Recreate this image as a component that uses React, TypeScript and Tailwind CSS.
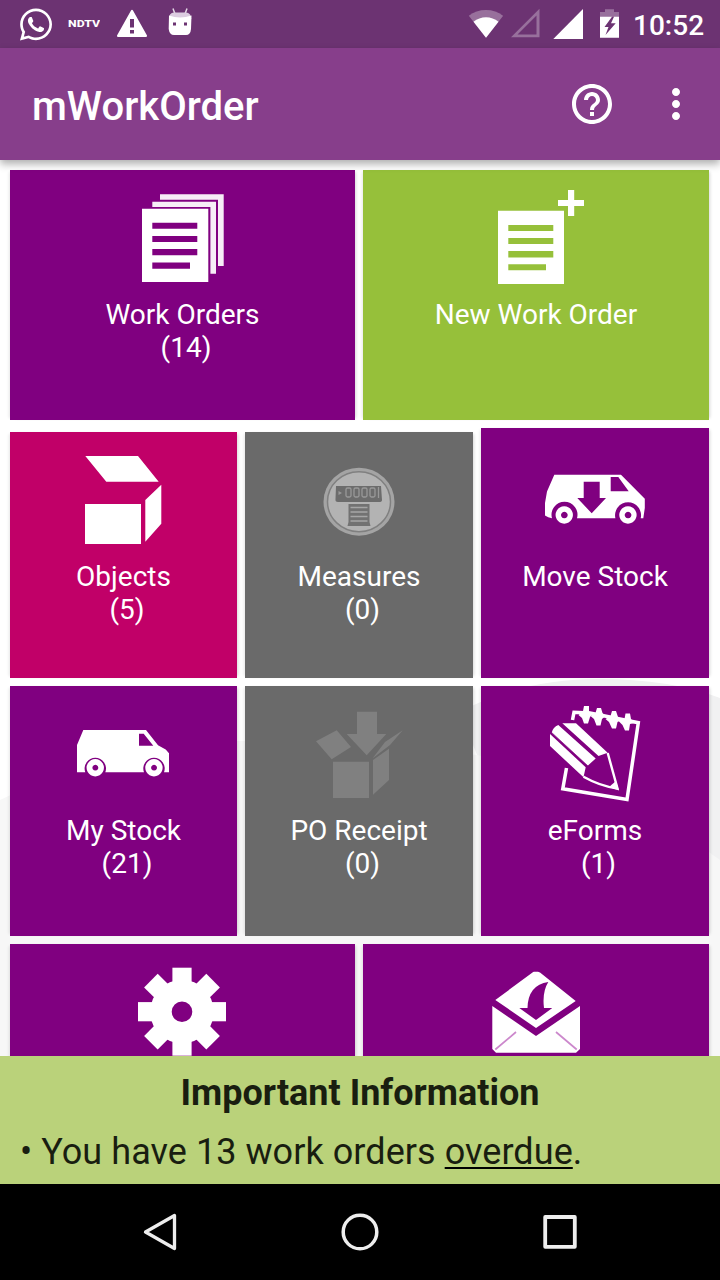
import type { ReactNode } from "react";
import { FaWhatsapp } from "react-icons/fa";
import { MdHelpOutline, MdMoreVert } from "react-icons/md";

function StatusBar() {
  return (
    <div className="flex h-12 shrink-0 items-center bg-[#6c3372] pr-4 pl-5 text-white">
      <FaWhatsapp className="h-[37px] w-8" />
      <svg className="ml-4 h-12 w-8" viewBox="68 0 32 48">
        <text x="68" y="27" fontSize="8.5" fontWeight="800" fill="#fff" textLength="32" lengthAdjust="spacingAndGlyphs" fontFamily="Roboto, sans-serif">
          NDTV
        </text>
      </svg>
      <svg className="ml-4 h-12 w-8" viewBox="116 0 32 48" fill="#fff">
        <path fillRule="evenodd" d="M132 9.7Q132.6 9.7 133 10.4L147 35.6Q147.4 37 146 37H118Q116.600 37 117 35.600L131 10.400Q131.400 9.700 132 9.700ZM130 19V27.500H134V19ZM130 30V33.500H134V30Z" />
      </svg>
      <svg className="ml-5 h-12 w-6" viewBox="168 0 24 48">
        <path d="M173 8.500L175 14M187 8.500L185 14" stroke="#e3d7e5" strokeWidth="1.500" />
        <path d="M169 19Q169 12.500 174 12.500H186Q191 12.500 191.300 19Z" fill="#dccce0" />
        <path d="M169 15.500Q180 19.500 191.500 15.500L191 29Q190.500 35 186 35H174Q169.500 35 168.700 29Z" fill="#fff" />
        <rect x="173" y="22.500" width="3" height="3" fill="#6c3372" />
        <rect x="184" y="22.500" width="3" height="3" fill="#6c3372" />
      </svg>
      <div className="flex-1" />
      <svg className="h-12 w-[35px]" viewBox="468 0 35 48" fill="#fff">
        <path fillOpacity=".3" d="M486 37.700L468.800 15.800Q476 10 486 10Q496 10 503.200 15.800Z" />
        <path d="M486 37.700L473.500 21.800Q479 17.300 486 17.300Q493 17.300 498.500 21.800Z" />
      </svg>
      <svg className="ml-2 h-12 w-[29px]" viewBox="511 0 29 48">
        <path fill="#fff" fillOpacity=".3" fillRule="evenodd" d="M511 37.300L539.500 8.700V37.300ZM517.500 34.500H536.500V15.500Z" />
      </svg>
      <svg className="ml-3 h-12 w-[31px]" viewBox="552 0 31 48">
        <path fill="#fff" d="M553.300 39L583 9V39Z" />
      </svg>
      <svg className="ml-[17px] h-12 w-[19px]" viewBox="600 0 19 48">
        <path fill="#fff" fillOpacity=".3" d="M600 17V12H605V9.200H614V12H619V17Z" />
        <path fill="#fff" fillRule="evenodd" d="M600 16.700H612L604.500 27H608.500L605.500 35L615.700 23.200H611L614 16.700H619V37.700H600Z" />
      </svg>
      <span className="ml-[14px] w-[71px] pt-[3px] text-[28px] leading-[45px] font-medium">10:52</span>
    </div>
  );
}

function AppBar() {
  return (
    <header className="relative z-10 flex h-28 shrink-0 items-center bg-[#873e8b] pr-5 pl-8 text-white shadow-[0_4px_8px_rgba(0,0,0,0.32)]">
      <h1 className="flex-1 pt-1.5 text-[40px] leading-[48px] font-medium">mWorkOrder</h1>
      <MdHelpOutline className="mr-9 size-12" />
      <MdMoreVert className="size-12" />
    </header>
  );
}

type TileProps = {
  tone: string;
  view: string;
  label?: string;
  count?: number;
  iconClass?: string;
  children: ReactNode;
};

function Tile({ tone, view, label, count, iconClass = "h-32", children }: TileProps) {
  return (
    <div className={`flex flex-col items-center overflow-hidden text-[28px] leading-[33px] text-white shadow-[3px_0_3px_-2px_rgba(0,0,0,0.16),-3px_0_3px_-2px_rgba(0,0,0,0.1)] ${tone}`}>
      <svg className={`w-[110px] shrink-0 ${iconClass}`} viewBox={view} fill="#fff">
        {children}
      </svg>
      {label && <span className="whitespace-nowrap">{label}</span>}
      {count !== undefined && <span className="whitespace-pre">{"\u00a0(" + count + ")"}</span>}
    </div>
  );
}

const PURPLE = "bg-[#800080]";
const GREY = "bg-[#6a6a6a]";

function Backdrop() {
  return (
    <svg className="absolute inset-0 -z-10 h-full w-full" viewBox="0 160 720 896" preserveAspectRatio="none">
      <rect y="160" width="720" height="896" fill="#fff" />
      <path d="M0 800Q120 741 240 741Q360 741 477 755H720V1056H0Z" fill="#f7f7f7" />
      <path d="M460 712Q520 679 600 679Q670 679 720 698V860Q690 840 640 790L477 755Z" fill="#f1f1f2" />
    </svg>
  );
}

function Tiles() {
  return (
    <main className="relative isolate flex h-[896px] shrink-0 flex-col gap-2 overflow-hidden pt-[10px] pr-[11px] pl-[10px]">
      <Backdrop />
      <div className="grid h-[250px] shrink-0 grid-cols-[345px_346px] gap-2">
        <Tile tone={PURPLE} view="128 170 110 128" label="Work Orders" count={14}>
          <path fillRule="evenodd" d="M142 208.700H208.300V282H142ZM152.300 222.700V228.700H197.300V222.700ZM152.300 236V242H197.300V236ZM152.300 249V255.300H197.300V249ZM152.300 262.500V268.700H190V262.500Z" />
          <path d="M152.300 201.800H216V273.700H210.400V207H152.300Z" fillOpacity=".93" />
          <path d="M160 194.300H223.700V266H218V199.800H160Z" fillOpacity=".93" />
        </Tile>
        <Tile tone="bg-[#96c03a]" view="481 170 110 128" label="New Work Order">
          <path fillRule="evenodd" d="M498 210.700H564V284H498ZM508.300 225V231H553.300V225ZM508.300 238V244H553.300V238ZM508.300 251V257.500H553.300V251ZM508.300 264.300V270.300H546V264.300Z" />
          <path d="M568 190H574.200V200H584V206H574.200V216H568V206H558V200H568Z" />
        </Tile>
      </div>
      <div className="grid h-[250px] shrink-0 grid-cols-[227px_228px_228px] gap-2">
        <Tile tone="mt-1 bg-[#c10068]" view="69 432 110 128" label="Objects" count={5}>
          <path d="M85.300 456H138L158.700 481.700H106.300ZM85 504H141V544H85ZM161.300 484.700V523.700L145.300 541.700V500Z" />
        </Tile>
        <Tile tone={`mt-1 ${GREY}`} view="304 432 110 128" label="Measures" count={0}>
          <ellipse cx="359" cy="501.700" rx="35.500" ry="34" fill="#a4a4a4" />
          <ellipse cx="359" cy="501.700" rx="31.500" ry="30" fill="#b3b3b3" stroke="#808080" strokeWidth="1.500" />
          <path d="M336 486H381L382 500Q382 502 379 502H338Q335 502 335.500 499Z" fill="#6c6c6c" />
          <path d="M338.500 491L342 493L338.500 495Z" fill="#999" />
          <g fill="none" stroke="#999" strokeWidth="1.300">
            <rect x="346" y="488" width="5" height="9" rx="1.500" />
            <rect x="354" y="488" width="5" height="9" rx="1.500" />
            <rect x="362" y="488" width="5" height="9" rx="1.500" />
            <rect x="370" y="488" width="5" height="9" rx="1.500" />
            <path d="M378.500 487V498" />
          </g>
          <path d="M348.500 504H369.500V522L370.500 526H347.500L348.500 522Z" fill="#727272" />
          <path d="M350.500 507.500H367.500M350.500 512H367.500M350.500 516.500H367.500M350.500 521H367.500" stroke="#a6a6a6" strokeWidth="1.600" />
        </Tile>
        <Tile tone={PURPLE} view="540 428 110 132" iconClass="h-[132px]" label="Move Stock">
          <path fillRule="evenodd" d="M554.300 474.700H621L644.800 498.700V508L643.300 518.300H640.700A13 13 0 1 0 615.400 518.300H577A13 13 0 1 0 552 518.300Q548 517.500 545 515.500V503L547 491.500ZM610.700 477V491.300H628.700L618.300 477ZM583.700 481.700V498H577.300L591.700 513.300L606 498H599.700V481.700Z" />
          <path fillRule="evenodd" d="M564.300 506.300A8.700 8.700 0 1 1 564.200 506.300ZM564.300 511.700A3.300 3.300 0 1 0 564.400 511.700ZM628 506.300A8.700 8.700 0 1 1 627.900 506.300ZM628 511.700A3.300 3.300 0 1 0 628.100 511.700Z" />
        </Tile>
      </div>
      <div className="grid h-[250px] shrink-0 grid-cols-[227px_228px_228px] gap-2">
        <Tile tone={PURPLE} view="69 686 110 128" label="My Stock" count={21}>
          <path fillRule="evenodd" d="M83.300 730H146L158 745.300L165.700 749.500L169 753.300V772.300H164A10.700 10.700 0 1 0 144 772.300H105.300A10.700 10.700 0 1 0 85.300 772.300H77V745ZM139 733.700V745.800H153.300L143.700 733.700Z" />
          <path fillRule="evenodd" d="M95.300 759A8.700 8.700 0 1 1 95.200 759ZM95.300 764.800A2.900 2.900 0 1 0 95.400 764.800ZM154 759A8.700 8.700 0 1 1 153.900 759ZM154 764.800A2.900 2.900 0 1 0 154.100 764.800Z" />
        </Tile>
        <Tile tone={GREY} view="304 686 110 128" label="PO Receipt" count={0}>
          <path fill="#808080" d="M357 711.700H377V734H386.300L366.700 755.300L346.700 734H357ZM333 761.700H369V798H333ZM373 760L389 748.700V780L373 794.700ZM316 741.300L336.700 730.300L351 747L331.700 759.300ZM402.700 730.300L390 745L372.700 758.300L385 742Z" />
        </Tile>
        <Tile tone={PURPLE} view="540 686 110 128" label="eForms" count={1}>
          <path d="M572.500 720L574 712.300L590 713L638.300 722.700L627 799.500L562.800 788.700L566.500 768" fill="none" stroke="#fff" strokeWidth="3.500" />
          <path d="M584 706H589V711L592.500 714L590 717L588 723.500H584L582 718L578.500 715L583 711ZM597 708H601L602.500 713L605.500 716L602 719L600.500 725.500H596.500L594 719L590.500 716L595.500 713ZM612 711H616L618 717L621.500 720L617.500 722L616 728.500H612L609 722L605.500 719L610.500 716ZM625.500 713.500H630L631 719L634 723L630 724L629 730.500H625L622.500 725L618.500 721L624.500 719Z" />
          <path d="M562.300 723.300H576L607.700 752.700L598.500 756ZM558.300 725Q553 727 551.700 732.700L587.700 765.700L595.700 758.500ZM550 734L585.700 767.300L583.500 777.300L550 746Z" />
          <path d="M550 731L588 766M560 724L598 758" stroke="#800080" strokeWidth=".7" />
          <path d="M607.700 753L617.500 788.500Q600 786 583.500 776.700" fill="none" stroke="#fff" strokeWidth="2.400" />
          <path d="M616 781L619 790.500L609 787Z" />
        </Tile>
      </div>
      <div className="grid h-[250px] shrink-0 grid-cols-[345px_346px] gap-2">
        <Tile tone={PURPLE} view="128 944 110 128">
          <circle cx="182" cy="1011.700" r="21" fill="none" stroke="#fff" strokeWidth="21.400" />
          {[0, 45, 90, 135, 180, 225, 270, 315].map((angle) => (
            <path key={angle} d="M172.400 967.700H191.600V985H172.400Z" transform={`rotate(${angle} 182 1011.700)`} />
          ))}
        </Tile>
        <Tile tone={PURPLE} view="481 944 110 128">
          <path fillRule="evenodd" d="M495.300 1000L532.500 972.500Q533 971.700 534 971.700H538L540 972.500L575.700 1001L536 1028ZM548.300 982Q528 985 527.500 1008H519.300L536 1020L552.300 1008H544Q542 992 548.300 982Z" />
          <path d="M492.300 1006L536 1036L580 1006V1049L576 1052.700H496L492.300 1049Z" />
          <path d="M495.300 1049.500L516 1032M576.700 1049.500L556 1032" stroke="#cc88cc" strokeWidth="1.700" />
        </Tile>
      </div>
    </main>
  );
}

function Notice() {
  return (
    <section className="h-32 shrink-0 bg-[#bad27a] pt-4 pl-5 text-[36px] leading-[42px] text-[#191e10]">
      <h2 className="pr-5 text-center font-bold">Important Information</h2>
      <p className="mt-[17px] tracking-[0.06px] whitespace-nowrap">
        •{" "}You have 13 work orders{" "}
        <a className="underline decoration-black decoration-2 underline-offset-[3px] [text-decoration-skip-ink:none]">overdue</a>.
      </p>
    </section>
  );
}

function NavBar() {
  return (
    <nav className="flex h-24 shrink-0 items-center justify-center gap-[152px] bg-black">
      <svg className="size-12" viewBox="136 1208 48 48" fill="none" stroke="#eee" strokeWidth="3.300" strokeLinejoin="round">
        <path d="M174.500 1215.500V1248.500L145.500 1232Z" />
      </svg>
      <svg className="size-12" viewBox="336 1208 48 48" fill="none" stroke="#eee" strokeWidth="3.500">
        <circle cx="360" cy="1232" r="16.800" />
      </svg>
      <svg className="size-12" viewBox="536 1208 48 48" fill="none" stroke="#eee" strokeWidth="3.800" strokeLinejoin="round">
        <rect x="545.200" y="1217" width="29.600" height="29.800" />
      </svg>
    </nav>
  );
}

export default function App() {
  return (
    <div className="flex h-[1280px] w-[720px] flex-col overflow-hidden bg-white font-[Roboto,sans-serif]">
      <StatusBar />
      <AppBar />
      <Tiles />
      <Notice />
      <NavBar />
    </div>
  );
}
